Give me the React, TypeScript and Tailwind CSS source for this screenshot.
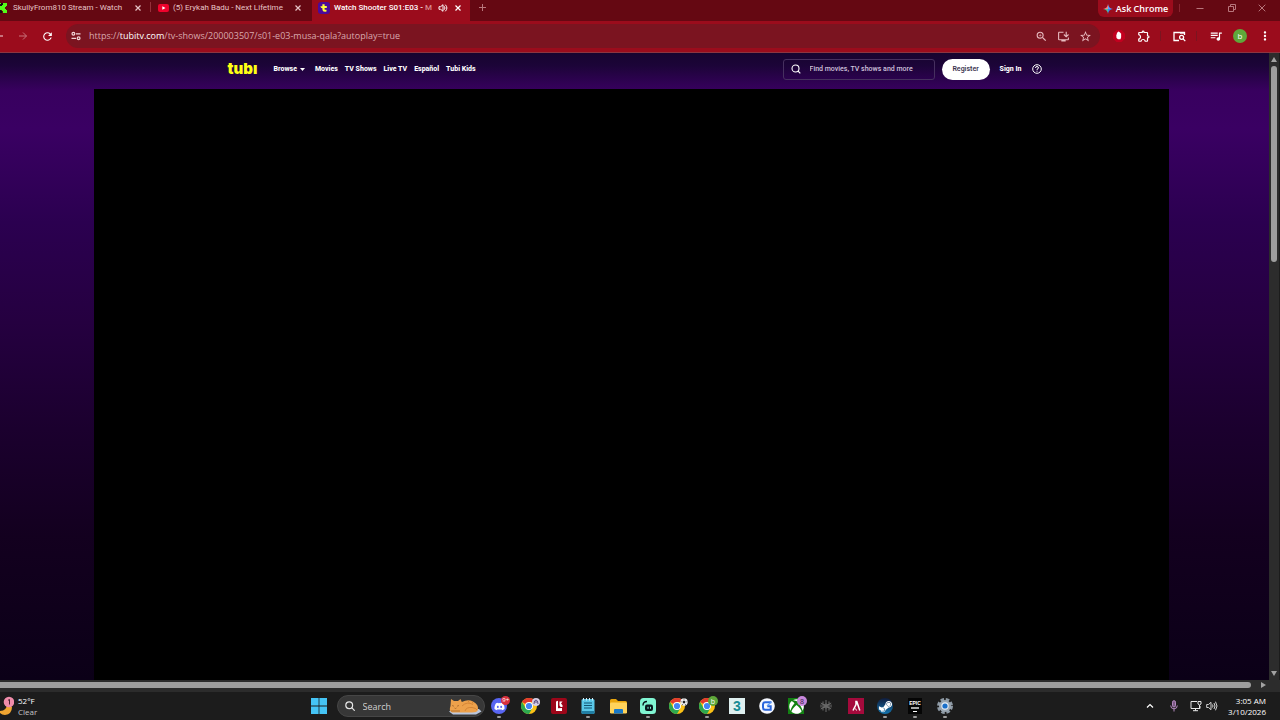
import type { ReactNode } from "react";
import { FaDiscord, FaSteamSymbol, FaXbox } from "react-icons/fa";
import {
  MdMoreVert,
  MdOutlineExtension,
  MdOutlineInstallDesktop,
  MdOutlineZoomIn,
  MdQueueMusic,
  MdRefresh,
  MdStarBorder,
} from "react-icons/md";

const uiFont = "font-['Open_Sans','Noto_Sans',sans-serif]";

function CloseButton({ label, active }: { label: string; active?: boolean }) {
  return (
    <button aria-label={label} className={active ? "text-white" : "text-[#e6c3c6]"}>
      <svg viewBox="0 0 8 8" className="size-2" stroke="currentColor" strokeWidth="1.2" fill="none">
        <path d="M1.5 1.5l5 5M6.5 1.5l-5 5" />
      </svg>
    </button>
  );
}

function TabStrip() {
  return (
    <div className="flex h-[21px] shrink-0 items-stretch bg-[#650812] font-['Roboto','Noto_Sans',sans-serif] text-[8px] leading-4 text-[#e6c3c6]">
      <div className="flex w-[150px] items-center gap-1.5 pb-1.5 pr-2">
        <svg viewBox="0 0 7 10" className="h-2.5 w-[7px] shrink-0">
          <path fill="#53fc18" d="M0 0h7v3H6v1H5v2h1v1h1v3H3V8H2V7H0z" />
          <path fill="#101010" d="M0 3h2V2h1V0H1v1H0zM0 7h1v1h1v2H0z" />
        </svg>
        <span className="flex-1 whitespace-nowrap">SkullyFrom810 Stream - Watch</span>
        <CloseButton label="Close Skully stream tab" />
      </div>
      <div className="mt-0.5 h-2.5 w-px bg-[#94303a]" />
      <div className="flex w-[161px] items-center gap-1 rounded-br-md pb-1.5 pl-[7px] pr-[10px]">
        <svg viewBox="0 0 11 8" className="h-2 w-[11px] shrink-0">
          <rect width="11" height="8" rx="2" fill="#f0022c" />
          <path d="M4.3 2.2v3.6L7.5 4z" fill="#fff" />
        </svg>
        <span className="flex-1 whitespace-nowrap">(5) Erykah Badu - Next Lifetime</span>
        <CloseButton label="Close Erykah Badu tab" />
      </div>
      <div className="flex w-[158px] items-center gap-1 bg-[#9b0c1c] pb-1.5 pl-1.5 pr-2 font-medium text-white">
        <svg viewBox="0 0 12 12" className="size-3 shrink-0">
          <rect width="12" height="12" rx="3" fill="#4b0a9a" />
          <path
            d="M4.4 2.2h2.2v1.9h2.2v1.9H6.6v1.2q0 .9 1.9.5v1.9Q4.4 10.4 4.4 7.5V6.2Q2.6 6.2 2.4 4.2H4.4z"
            fill="#ffff3a"
          />
        </svg>
        <span className="flex-1 whitespace-nowrap">
          Watch Shooter S01:E03 - <span className="text-[#d8898f]">M</span>
        </span>
        <button aria-label="Mute tab" className="mr-0.5">
          <svg viewBox="0 0 10 10" className="size-2.5" fill="none" stroke="#fff" strokeWidth="1">
            <path d="M1 3.700h1.700L5 1.700v6.600L2.700 6.300H1z" />
            <path d="M6.300 3.300q1.400 1.700 0 3.400M7.300 1.700q3.200 3.300 0 6.600" />
          </svg>
        </button>
        <CloseButton label="Close Shooter tab" active />
      </div>
      <button aria-label="New tab" className="mb-1.5 ml-2">
        <svg viewBox="0 0 9 9" className="size-[9px]" stroke="#b8767c">
          <path d="M4.500 1v7M1 4.500h7" />
        </svg>
      </button>
      <div className="ml-auto flex items-start">
        <button className="flex h-[17px] w-[75px] items-center justify-center gap-[3px] rounded-b-md bg-[#9b0c1c] font-['Open_Sans',sans-serif] text-[9px] font-semibold text-white">
          <svg viewBox="0 0 10 10" className="size-2.5">
            <path d="M5 0Q5.500 4.500 5 5H0Q4.500 4.500 5 0" fill="#ef8a8a" />
            <path d="M5 0Q5.500 4.500 10 5H5z" fill="#5aa2ff" />
            <path d="M10 5Q5.500 5.500 5 10V5z" fill="#3b82f6" />
            <path d="M0 5Q4.500 5.500 5 10V5z" fill="#48c79a" />
          </svg>
          Ask Chrome
        </button>
        <div className="ml-1.5 mt-1 h-2 w-px bg-[#8a2530]" />
        <div className="flex text-[#b8767c]">
          <button aria-label="Minimize" className="flex h-4 w-10 items-center justify-center">
            <svg viewBox="0 0 8 8" className="size-2" stroke="currentColor">
              <path d="M0.500 4.500h7" />
            </svg>
          </button>
          <button aria-label="Restore" className="flex h-4 w-6 items-center justify-center">
            <svg viewBox="0 0 8 8" className="size-2" stroke="currentColor" fill="none">
              <path d="M0.500 2.500h5v5h-5zM2.500 2V.5h5v5H6" />
            </svg>
          </button>
          <button aria-label="Close window" className="flex h-4 w-9 items-center justify-center">
            <svg viewBox="0 0 8 8" className="size-2" stroke="currentColor">
              <path d="M.7.7l6.600 6.600M7.300.7L.7 7.300" />
            </svg>
          </button>
        </div>
      </div>
    </div>
  );
}

function ToolButton({ label, children }: { label: string; children: ReactNode }) {
  return (
    <button aria-label={label} className="flex h-6 w-[25px] shrink-0 items-center justify-center">
      {children}
    </button>
  );
}

function Toolbar() {
  return (
    <div className="flex h-8 shrink-0 items-center border-b border-[#8c3540] bg-[#9b0c1c] pb-px text-white">
      <button aria-label="Back" className="w-[10px]">
        <svg viewBox="0 0 4 2" className="h-0.5 w-1 text-[#f4d8da]">
          <path d="M0 1h3" stroke="currentColor" />
        </svg>
      </button>
      <ToolButton label="Forward">
        <svg viewBox="0 0 10 10" className="size-2.5" fill="none" stroke="#c8737b">
          <path d="M1 5h7.500M5 1.500L8.500 5 5 8.500" />
        </svg>
      </ToolButton>
      <ToolButton label="Reload">
        <MdRefresh className="size-[13px]" />
      </ToolButton>
      <div className="ml-1.5 flex h-6 min-w-0 flex-1 items-center rounded-full bg-[#7b1420] pl-[5px] pr-1">
        <button aria-label="View site information" className="mr-2">
          <svg viewBox="0 0 10 10" className="size-2.5" fill="none" stroke="#f4d8da" strokeWidth="1.2">
            <circle cx="2.400" cy="2.800" r="1.400" />
            <path d="M5 2.800h4.500M.5 7.300H5" />
            <circle cx="7.600" cy="7.300" r="1.400" />
          </svg>
        </button>
        <div
          role="textbox"
          aria-label="Address and search bar"
          contentEditable
          suppressContentEditableWarning
          className="flex-1 whitespace-nowrap text-[9px] leading-4 text-[#d9a9ae] outline-none"
        >
          https://<span className="text-white">tubitv.com</span>/tv-shows/200003507/s01-e03-musa-qala?autoplay=true
        </div>
        <div className="flex text-[#e8bcc0]">
          <button aria-label="Zoom" className="flex w-[22px] justify-center">
            <MdOutlineZoomIn className="size-[13px]" />
          </button>
          <button aria-label="Install app" className="flex w-[22px] justify-center">
            <MdOutlineInstallDesktop className="size-[13px]" />
          </button>
          <button aria-label="Bookmark" className="flex w-[22px] justify-center">
            <MdStarBorder className="size-[13px]" />
          </button>
        </div>
      </div>
      <div className="w-1.5" />
      <ToolButton label="AdBlock">
        <svg viewBox="0 0 12 12" className="size-3">
          <path d="M3.500 0h5L12 3.500v5L8.500 12h-5L0 8.500v-5z" fill="#c3001f" />
          <path d="M3.300 5.500 4 3l.8-1 .8-.4.8.4.9.7.8 1v3.500L7.500 9.300H5L3.500 8z" fill="#fff" />
        </svg>
      </ToolButton>
      <ToolButton label="Extensions">
        <MdOutlineExtension className="size-[14px]" />
      </ToolButton>
      <div className="ml-1 h-2.5 w-px bg-[#7b1420]" />
      <div className="w-1.5" />
      <ToolButton label="Search this page">
        <svg viewBox="0 0 13 11" className="h-[11px] w-[13px]" fill="none" stroke="#fff" strokeWidth="1.3">
          <path d="M6 9.500H1V1.500h10.500V4M7 2.200h4.500" />
          <circle cx="8.600" cy="6.300" r="2" />
          <path d="M10 7.800l2.300 2.300" />
        </svg>
      </ToolButton>
      <div className="ml-1 h-2.5 w-px bg-[#7b1420]" />
      <div className="w-1.5" />
      <ToolButton label="Media controls">
        <MdQueueMusic className="size-[14px]" />
      </ToolButton>
      <button aria-label="Profile" className="mx-[5px] flex size-[14px] items-center justify-center rounded-full bg-[#5fa83a] text-[8px] leading-none">
        b
      </button>
      <ToolButton label="Chrome menu">
        <MdMoreVert className="size-[14px]" />
      </ToolButton>
      <div className="w-[3px]" />
    </div>
  );
}

function SiteHeader() {
  const links = ["Movies", "TV Shows", "Live TV", "Español", "Tubi Kids"];
  return (
    <header className="mx-auto flex h-8 w-full max-w-[814px] shrink-0 items-center font-['Roboto','Liberation_Sans',sans-serif] text-[7px] font-extrabold leading-4 text-white">
      <a href="#home" aria-label="Tubi" className="w-[46px] font-['Inter',sans-serif] text-[15px] font-black text-[#ffff13]">
        tubı
      </a>
      <nav className="flex items-center gap-[7px]">
        <a href="#browse" className="mr-[3px] flex items-center gap-[3px]">
          Browse
          <svg viewBox="0 0 5 3" className="h-[3px] w-[5px]">
            <path d="M0 0h5L2.500 3z" fill="#fff" />
          </svg>
        </a>
        {links.map((l) => (
          <a key={l} href="#nav" className="whitespace-nowrap">
            {l}
          </a>
        ))}
      </nav>
      <label className="ml-auto flex h-[21px] w-[152px] items-center gap-[9px] rounded-[3px] border border-[#46305f] px-[7px]">
        <svg viewBox="0 0 10 10" className="size-2.5 shrink-0" fill="none" stroke="#fff" strokeWidth="1.1">
          <circle cx="4.500" cy="4.500" r="3.500" />
          <path d="M7 7l2.300 2.300" />
        </svg>
        <input
          aria-label="Find movies, TV shows and more"
          placeholder="Find movies, TV shows and more"
          className="min-w-0 flex-1 bg-transparent font-medium outline-none placeholder:text-[#cfc2dc]"
        />
      </label>
      <button className="ml-[7px] h-[21px] w-12 rounded-full bg-white font-semibold text-[#3c3550]">Register</button>
      <a href="#signin" className="ml-2.5">
        Sign In
      </a>
      <button aria-label="Help" className="ml-2.5">
        <svg viewBox="0 0 10 10" className="size-2.5" fill="none" stroke="#fff">
          <circle cx="5" cy="5" r="4.300" />
          <path d="M3.500 4q0-1.500 1.500-1.500T6.500 4Q6.500 4.600 5 5.300V6M5 6.700v1" />
        </svg>
      </button>
    </header>
  );
}

function PageArea() {
  return (
    <div className="flex min-h-0 flex-1">
      <main className="flex min-w-0 flex-1 flex-col bg-[linear-gradient(to_bottom,#17042f_0%,#1c0438_2%,#38005f_6%,#3a0063_12%,#2b0050_27%,#250040_43%,#1b002e_60%,#13001f_77%,#0b0017_100%)]">
        <SiteHeader />
        <div className="h-1 shrink-0" />
        <section aria-label="Video player" className="ml-[94px] mr-[100px] flex-1 bg-black" />
      </main>
      <div className="mr-px flex w-2.5 flex-col items-center gap-1 bg-[#2c2c2c] py-1">
        <svg viewBox="0 0 6 5" className="h-[5px] w-1.5">
          <path d="M3 0l3 5H0z" fill="#a2a2a2" />
        </svg>
        <div className="h-[196px] w-1.5 rounded-full bg-[#9e9e9e]" />
        <svg viewBox="0 0 6 5" className="mt-auto h-[5px] w-1.5">
          <path d="M3 5l3-5H0z" fill="#a2a2a2" />
        </svg>
      </div>
    </div>
  );
}

function HorizontalScrollbar() {
  return (
    <div className="flex h-3 shrink-0 items-center bg-[#2c2c2c] pb-0.5 pr-[14px]">
      <div className="h-1.5 flex-1 rounded-r-full bg-[#9e9e9e]" />
      <svg viewBox="0 0 5 6" className="ml-2.5 h-1.5 w-[5px]">
        <path d="M0 0l5 3-5 3z" fill="#a2a2a2" />
      </svg>
    </div>
  );
}

function ChromeLogo() {
  return (
    <svg viewBox="0 0 16 16" className="size-4">
      <circle cx="8" cy="8" r="8" fill="#fbc116" />
      <path d="M8 8 1.070 4A8 8 0 0 1 14.930 4H8z" fill="#e33b2e" />
      <path d="M1.070 4A8 8 0 0 0 8 16l3.460-6L8 8 4.540 10z" fill="#2da94f" />
      <circle cx="8" cy="8" r="4" fill="#fff" />
      <circle cx="8" cy="8" r="3.100" fill="#4285f4" />
    </svg>
  );
}

type TaskbarApp = { name: string; icon: ReactNode; badge?: ReactNode; open?: boolean };

const apps: TaskbarApp[] = [
  {
    name: "Discord",
    open: true,
    icon: (
      <span className="flex size-4 items-center justify-center rounded-full bg-[#5865f2]">
        <FaDiscord className="size-[11px] text-white" />
      </span>
    ),
    badge: <span className="flex size-[9px] items-center justify-center rounded-full bg-[#d9303e] text-[6px] text-white">9+</span>,
  },
  {
    name: "Chrome",
    icon: <ChromeLogo />,
    badge: (
      <svg viewBox="0 0 8 8" className="mt-0.5 size-2">
        <circle cx="4" cy="4" r="4" fill="#d7cfe6" />
        <path d="M2 6q0-4 2-4t2 4M3 4h2" stroke="#594b80" fill="none" />
      </svg>
    ),
  },
  {
    name: "Game launcher",
    icon: (
      <svg viewBox="0 0 16 16" className="size-4">
        <rect width="16" height="16" rx="2" fill="#9c0619" />
        <path d="M5 3.500l2-.8v7.600l4-.3v3H5z" fill="#fff" />
        <path d="M8.500 3.500h3L10 5.500l1.500 1.800V9H9.700L8.500 7.500z" fill="#fff" />
      </svg>
    ),
  },
  {
    name: "Notepad",
    open: true,
    icon: (
      <svg viewBox="0 0 14 16" className="h-4 w-3.5">
        <rect x=".5" y="1" width="13" height="15" rx="1.500" fill="#59c7e8" />
        <path d="M.5 13h13v1.500q0 1.500-1.500 1.500H2Q.5 16 .5 14.500z" fill="#217ea3" />
        <path d="M3 5h8M3 7.500h8M3 10h8" stroke="#135572" />
        <path d="M2.500 0v2.500M5.500 0v2.500M8.500 0v2.500M11.500 0v2.500" stroke="#d7eef6" />
      </svg>
    ),
  },
  {
    name: "File Explorer",
    icon: (
      <svg viewBox="0 0 17 15" className="h-[15px] w-[17px]">
        <path d="M0 1.500Q0 0 1.500 0H6l2 2h7.500Q17 2 17 3.500V6H0z" fill="#e9a50d" />
        <rect y="3.500" width="17" height="11" rx="1.200" fill="#ffd35b" />
        <path d="M4 14.500V11q0-1 1-1h7q1 0 1 1v3.500z" fill="#1878c8" />
      </svg>
    ),
  },
  {
    name: "Streamlabs",
    open: true,
    icon: (
      <svg viewBox="0 0 16 16" className="size-4">
        <rect width="16" height="16" rx="3.500" fill="#80f5d2" />
        <rect x="5" y="6.500" width="8" height="6.500" rx="2" fill="#09161d" />
        <path d="M3 7.500Q3 3.500 7 3.500" stroke="#09161d" strokeWidth="1.4" fill="none" />
        <path d="M8 8.800v2M10.500 8.800v2" stroke="#80f5d2" />
      </svg>
    ),
  },
  {
    name: "Chrome, second profile",
    icon: <ChromeLogo />,
    badge: (
      <svg viewBox="0 0 8 8" className="mt-0.5 size-2">
        <circle cx="4" cy="4" r="3.700" fill="#f0f0f0" />
        <path d="M4 2.600l1.400 1L5 5.200H3L2.600 3.600z" fill="#222" />
        <path d="M.6 3l.9.8M7.400 3l-.9.800M2.200 7.200l.4-.9M5.800 7.200l-.4-.9M3.300.6l.7.700.7-.7" stroke="#222" strokeWidth=".8" fill="none" />
      </svg>
    ),
  },
  {
    name: "Chrome, profile b",
    open: true,
    icon: <ChromeLogo />,
    badge: <span className="flex size-2.5 items-center justify-center rounded-full bg-[#5fa83a] text-[7px] leading-none text-white">b</span>,
  },
  {
    name: "3ds Max",
    icon: (
      <span className="flex size-4 items-center justify-center bg-[#dff0f0] font-['Liberation_Sans',sans-serif] text-[14px] font-bold leading-4 text-[#168b94]">3</span>
    ),
  },
  {
    name: "G app",
    icon: (
      <svg viewBox="0 0 16 16" className="size-4">
        <circle cx="8" cy="8" r="7.800" fill="#f5f8ff" />
        <path d="M12.500 4.300H6.300Q4 4.300 4 6.500v3q0 2.200 2.300 2.200h5.400V8.300H8.300" fill="none" stroke="#2864dc" strokeWidth="2" />
        <path d="M8 8l4-3.700" stroke="#5b9bf3" strokeWidth="1.3" />
      </svg>
    ),
  },
  {
    name: "Xbox",
    icon: (
      <span className="flex size-4 items-center justify-center bg-[#138013]">
        <FaXbox className="size-[15px] text-white" />
      </span>
    ),
    badge: <span className="flex size-2.5 items-center justify-center rounded-full bg-[#c887dc] text-[7px] leading-none text-[#342040]">8</span>,
  },
  {
    name: "Atom tool",
    icon: (
      <svg viewBox="0 0 12 12" className="size-3" fill="none" stroke="#747474" strokeWidth=".9">
        <path d="M6 0v12M.8 3l10.400 6M11.200 3L.8 9" />
        <circle cx="6" cy="6" r="2" />
        <path d="M3 1.500v9M9 1.500v9M1 4.500v3M11 4.500v3" />
      </svg>
    ),
  },
  {
    name: "Red A app",
    icon: (
      <svg viewBox="0 0 16 16" className="size-4">
        <rect width="16" height="16" fill="#a50a3c" />
        <path d="M7.200 3.500h1.600l3 9M8 3.500v3L5 12.500" stroke="#fff" strokeWidth="1.5" fill="none" />
        <path d="M7.500 10.500l1 2" stroke="#fff" />
      </svg>
    ),
  },
  {
    name: "Steam",
    open: true,
    icon: (
      <span className="flex size-4 items-center justify-center rounded-full bg-[linear-gradient(#101c3c,#1275b0)]">
        <FaSteamSymbol className="size-[15px] text-white" />
      </span>
    ),
  },
  {
    name: "Epic Games",
    open: true,
    icon: (
      <span className="flex h-4 w-3.5 flex-col items-center bg-[#050505] pt-0.5 font-['Liberation_Sans',sans-serif] font-bold leading-none text-white">
        <span className="text-[5px] leading-[7px]">EPIC</span>
        <span className="h-0.5 w-2 bg-[#a8a8a8]" />
        <span className="mt-0.5 h-px w-1 bg-white" />
      </span>
    ),
  },
  {
    name: "Settings",
    open: true,
    icon: (
      <svg viewBox="0 0 16 16" className="size-4">
        <circle cx="8" cy="8" r="6.500" fill="none" stroke="#8e9aa5" strokeWidth="3" strokeDasharray="3.400 1.700" />
        <circle cx="8" cy="8" r="6" fill="#9ba7b2" />
        <circle cx="8" cy="8" r="3.700" fill="#e5eef7" />
        <circle cx="8" cy="8" r="2.600" fill="#1a6fc9" />
      </svg>
    ),
  },
];

function SleepingCat() {
  return (
    <svg viewBox="0 0 34 18" className="h-[18px] w-[34px] shrink-0">
      <path d="M1 14.500L6 12h25l2.500 2.500L28 17.500H5z" fill="#b9c6dd" />
      <path d="M3 2l3 2h4l2.500-2 1.300 3Q20 2 25 4.500q6 3 5 8.500-1 2.500-6 2.500H4Q.5 14 2.500 9z" fill="#eda14b" />
      <path d="M14 9q5-5 11-1.500M17 14q1-4 7-3.500 4 .5 5 2.500M20 3.500l1 2M24 4.500l1 2" stroke="#c8782c" fill="none" strokeWidth=".7" />
      <path d="M4 8.500l2 .7M9 9.200l2-.7M6.500 11l1 .5 1-.5M3 14h9" stroke="#8a5020" fill="none" strokeWidth=".6" />
    </svg>
  );
}

function Taskbar() {
  return (
    <footer className="grid h-7 shrink-0 grid-cols-[1fr_auto_1fr] items-center bg-[#1c1c1c] pr-[14px] text-[8px] leading-[11px] text-[#e8e8e8]">
      <div className="flex items-center gap-1">
        <svg viewBox="0 0 14 20" className="h-5 w-3.5">
          <path d="M0 15q7 0 7-8l5 4q0 7-7 8-3 0-5-2z" fill="#f0a531" />
          <circle cx="9" cy="6" r="5.300" fill="#ef8caa" />
          <path d="M8 4.300L9.500 3.500v5" stroke="#472030" fill="none" />
        </svg>
        <div>
          <div className="text-white">52°F</div>
          <div className="text-[#c6c6c6]">Clear</div>
        </div>
      </div>
      <div className="flex items-center pr-1.5">
        <button aria-label="Start" className="flex w-9 justify-center">
          <svg viewBox="0 0 16 16" className="size-4">
            <path d="M0 0h7.600v7.600H0zM8.400 0H16v7.600H8.400zM0 8.400h7.600V16H0zM8.400 8.400H16V16H8.400z" fill="#45c4f5" />
          </svg>
        </button>
        <label className="flex h-[22px] w-[148px] items-center gap-2 rounded-full border border-[#464646] bg-[#373737] pl-[7px] pr-0.5">
          <svg viewBox="0 0 10 10" className="size-2.5 shrink-0" fill="none" stroke="#e6e6e6" strokeWidth="1.2">
            <circle cx="4.200" cy="4.200" r="3.400" />
            <path d="M6.700 6.700l3 3" />
          </svg>
          <input
            aria-label="Search"
            placeholder="Search"
            className="min-w-0 flex-1 bg-transparent text-[9px] outline-none placeholder:text-[#cfcfcf]"
          />
          <SleepingCat />
        </label>
        <div className="grid w-[475px] grid-cols-16">
          {apps.map((a) => (
            <button key={a.name} aria-label={a.name} className="relative flex h-7 items-center justify-center">
              {a.icon}
              {a.badge && <span className="absolute right-1 top-1">{a.badge}</span>}
              {a.open && <span className="absolute bottom-0.5 h-0.5 w-1 rounded-full bg-[#9b9b9b]" />}
            </button>
          ))}
        </div>
      </div>
      <div className="flex items-center justify-end">
        <button aria-label="Show hidden icons" className="mr-4">
          <svg viewBox="0 0 8 8" className="size-2" fill="none" stroke="#fff" strokeWidth="1.2">
            <path d="M1 5.500l3-3 3 3" />
          </svg>
        </button>
        <button aria-label="Microphone" className="mr-3">
          <svg viewBox="0 0 8 12" className="h-3 w-2" fill="none" stroke="#b48abf">
            <rect x="2.500" y=".7" width="3" height="6.300" rx="1.500" fill="#7c5a86" />
            <path d="M.7 5.500q0 3.300 3.300 3.300t3.300-3.300M4 9v2.500" />
          </svg>
        </button>
        <button aria-label="Network" className="mr-1">
          <svg viewBox="0 0 12 12" className="size-3" fill="none" stroke="#e8e8e8">
            <path d="M7 1.500H1v7h9V6M3 10.700h5M5.500 8.500v2M8 1.500h3V4L9.500 5 8 4zM9.500 5v3" />
          </svg>
        </button>
        <button aria-label="Volume">
          <svg viewBox="0 0 12 12" className="size-3" fill="none" stroke="#e8e8e8" strokeWidth=".9">
            <path d="M.7 4.500h1.800L5 2.300v7.400L2.500 7.500H.7zM6.500 4.500q1 1.500 0 3M8 3q2 3 0 6M9.500 1.700q3 4.300 0 8.600" />
          </svg>
        </button>
        <div className="w-12 whitespace-nowrap text-right text-white">
          <div>3:05 AM</div>
          <div>3/10/2026</div>
        </div>
      </div>
    </footer>
  );
}

export default function App() {
  return (
    <div className={`flex h-screen flex-col overflow-hidden bg-[#1c1c1c] ${uiFont}`}>
      <TabStrip />
      <Toolbar />
      <PageArea />
      <HorizontalScrollbar />
      <Taskbar />
    </div>
  );
}
